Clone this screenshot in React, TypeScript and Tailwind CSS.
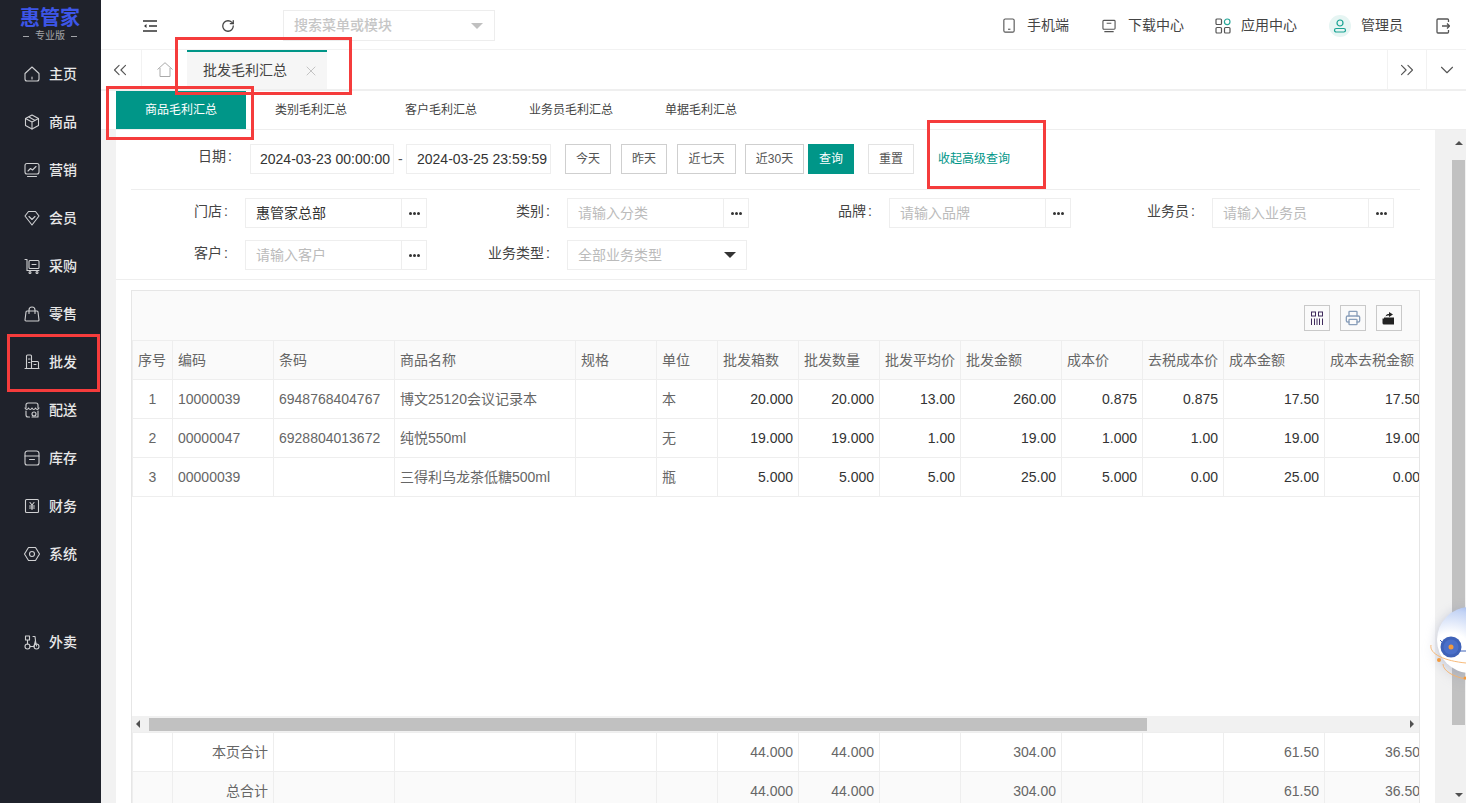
import type { ReactNode } from "react";
import { ChevronDown, ChevronsLeft, ChevronsRight, Printer, RotateCw, X } from "lucide-react";

const widths = [40, 101, 121, 181, 81, 61, 81, 81, 81, 101, 81, 81, 101, 101];
const headers = ["序号", "编码", "条码", "商品名称", "规格", "单位", "批发箱数", "批发数量", "批发平均价", "批发金额", "成本价", "去税成本价", "成本金额", "成本去税金额"];
const rows = [
  ["1", "10000039", "6948768404767", "博文25120会议记录本", "", "本", "20.000", "20.000", "13.00", "260.00", "0.875", "0.875", "17.50", "17.50"],
  ["2", "00000047", "6928804013672", "纯悦550ml", "", "无", "19.000", "19.000", "1.00", "19.00", "1.000", "1.00", "19.00", "19.00"],
  ["3", "00000039", "", "三得利乌龙茶低糖500ml", "", "瓶", "5.000", "5.000", "5.00", "25.00", "5.000", "0.00", "25.00", "0.00"],
];
const totals = [
  ["", "本页合计", "", "", "", "", "44.000", "44.000", "", "304.00", "", "", "61.50", "36.50"],
  ["", "总合计", "", "", "", "", "44.000", "44.000", "", "304.00", "", "", "61.50", "36.50"],
];

function NavIcon({ children }: { children: ReactNode }) {
  return (
    <svg viewBox="0 0 16 16" className="h-4 w-4 shrink-0" fill="none" stroke="#cfd0d2" strokeWidth="1.100" strokeLinejoin="round" strokeLinecap="round">
      {children}
    </svg>
  );
}

const nav: { label: string; icon: ReactNode; gap?: boolean }[] = [
  { label: "主页", icon: <><path d="M1 7.500 8 1l7 6.500V13a2 2 0 0 1-2 2H3a2 2 0 0 1-2-2z" /><path d="M8 11v2" /></> },
  { label: "商品", icon: <><path d="M8 1l6.500 3.500v7L8 15l-6.500-3.500v-7z" /><path d="M1.500 4.500 8 8l6.500-3.500M8 8v7M5 3l6 3.500" /></> },
  { label: "营销", icon: <><rect x="1" y="1.500" width="14" height="10.500" rx="2" /><path d="M4 9l2.500-2.500 2 1.500L12 4.500M3.500 14.500h9" /></> },
  { label: "会员", icon: <><path d="M4.500 1.500h7L15 6l-7 9-7-9z" /><path d="M5 6.500 8 9.500l3-3" /></> },
  { label: "采购", icon: <><path d="M1 1.500h2v10.500" /><rect x="5" y="2.500" width="10" height="8" rx="1" /><path d="M8 6.500h4M3 12.500h12" /><circle cx="6" cy="14.500" r="1" /><circle cx="13" cy="14.500" r="1" /></> },
  { label: "零售", icon: <><path d="M3 5h10a1 1 0 0 1 1 1l1 8a1 1 0 0 1-1 1H2a1 1 0 0 1-1-1l1-8a1 1 0 0 1 1-1z" /><path d="M5 7.500V4a3 3 0 0 1 6 0v3.500" /></> },
  { label: "批发", icon: <><path d="M2.500 14.500V2a1 1 0 0 1 1-1h3a1 1 0 0 1 1 1v12.500M7.500 7.500h6a1 1 0 0 1 1 1v6" /><path d="M1 14.500h14M4.500 5h1.500M4.500 8.500h1.500M10 10.500h2" /></> },
  { label: "配送", icon: <><path d="M2 6V3a2 2 0 0 1 2-2h8a2 2 0 0 1 2 2v3" /><path d="M1 6c1 2 2.500 2 3.500 0 1 2 2.500 2 3.500 0 1 2 2.500 2 3.500 0 1 2 2.500 2 3.500 0" /><path d="M2 9v4a2 2 0 0 0 2 2h1.500M14 9v6H8" /><circle cx="10" cy="12" r="2" /></> },
  { label: "库存", icon: <><path d="M1 6V3.500A2.500 2.500 0 0 1 3.500 1h9A2.500 2.500 0 0 1 15 3.500V6z" /><path d="M1 6v7a2 2 0 0 0 2 2h10a2 2 0 0 0 2-2V6M5.500 9.500h5" /></> },
  { label: "财务", icon: <><rect x="1.500" y="1.500" width="13" height="13" rx="1" /><path d="M6 4.500l2 2.500 2-2.500M5.500 8h5M5.500 10h5M8 7v4.500" /></> },
  { label: "系统", icon: <><path d="M4.500 1.500h7L15.500 8l-4 6.500h-7L.5 8z" /><circle cx="8" cy="8" r="2.500" /></> },
  { label: "外卖", gap: true, icon: <><circle cx="3.500" cy="12.500" r="2.500" /><circle cx="12.500" cy="12.500" r="2.500" /><path d="M1.500 2h4v4h-4zM6 12.500h4l1.500-6L11 2.500H9M3.500 6v4M11.500 7l1 5" /></> },
];

function Sidebar() {
  return (
    <aside className="flex w-[101px] shrink-0 flex-col bg-[#1f222b]">
      <div className="flex h-[50px] flex-col items-center pt-[7px] pr-[1px]">
        <div className="text-[20px] leading-[22px] font-bold text-[#3d56e8]">惠管家</div>
        <div className="flex items-center gap-[6px] text-[10px] leading-[14px] text-[#a3a5a9]">
          <span className="h-px w-[6px] bg-[#a3a5a9]" />
          专业版
          <span className="h-px w-[6px] bg-[#a3a5a9]" />
        </div>
      </div>
      {nav.map((item) => (
        <div key={item.label} className={`flex h-12 items-center gap-[9px] pl-[24px] text-[14px] font-medium text-[#e8e8e8] ${item.gap ? "mt-10" : ""}`}>
          <NavIcon>{item.icon}</NavIcon>
          {item.label}
        </div>
      ))}
    </aside>
  );
}

function TopItem({ icon, label, className }: { icon: ReactNode; label: string; className: string }) {
  return (
    <div className={`flex items-center ${className}`}>
      {icon}
      <span className="text-[14px] text-[#444]">{label}</span>
    </div>
  );
}

function Header() {
  return (
    <header className="flex h-[50px] shrink-0 items-center border-b border-[#f2f2f2] pt-[2px]">
      <div className="flex w-[98px] justify-center">
        <svg viewBox="0 0 14 12" className="h-3 w-[14px]" fill="none" stroke="#333" strokeWidth="1.300">
          <path d="M0 1h14M6 6h8M0 11h14" />
          <path d="M3.500 4 1 6l2.500 2z" fill="#333" stroke="none" />
        </svg>
      </div>
      <div className="flex w-[58px] justify-center">
        <RotateCw size={14} strokeWidth={2.200} color="#444" />
      </div>
      <div className="ml-[26px] flex h-[31px] w-[212px] items-center justify-between border border-[#ededed] px-[10px] text-[14px] font-medium text-[#c6c6c6]">
        搜索菜单或模块
        <span className="mr-[1px] h-0 w-0 border-x-[6px] border-t-[6px] border-x-transparent border-t-[#c0c0c0]" />
      </div>
      <div className="ml-auto flex items-center">
        <TopItem
          className="w-[100px] gap-[11px]"
          label="手机端"
          icon={
            <svg viewBox="0 0 14 16" className="h-[15px] w-[14px]" fill="none" stroke="#555" strokeWidth="1.200">
              <rect x="1.500" y="1" width="11" height="14" rx="1.500" />
              <path d="M6 12h2.500" />
            </svg>
          }
        />
        <TopItem
          className="w-[113px] gap-[12px]"
          label="下载中心"
          icon={
            <svg viewBox="0 0 15 14" className="h-[14px] w-[14px]" fill="none" stroke="#555" strokeWidth="1.200">
              <rect x="1" y="1" width="13" height="9.500" rx="1" />
              <path d="M5 4h5M2.500 13h10" />
            </svg>
          }
        />
        <TopItem
          className="w-[114px] gap-[10px]"
          label="应用中心"
          icon={
            <svg viewBox="0 0 16 16" className="h-4 w-4" fill="none" stroke="#555" strokeWidth="1.200">
              <rect x="1" y="1" width="5.500" height="5.500" rx="1" />
              <rect x="1" y="9.500" width="5.500" height="5.500" rx="1" />
              <rect x="9.500" y="9.500" width="5.500" height="5.500" rx="1" />
              <circle cx="12.200" cy="3.800" r="2.800" stroke="#2aa89a" />
            </svg>
          }
        />
        <div className="flex w-[107px] items-center gap-[10px]">
          <span className="flex h-[22px] w-[22px] items-center justify-center rounded-full bg-[#e6f5f3]">
            <svg viewBox="0 0 14 14" className="h-[14px] w-[14px]" fill="none" stroke="#1aa394" strokeWidth="1.200">
              <circle cx="7" cy="4" r="3" />
              <rect x="1.500" y="9.500" width="11" height="3.500" rx="1.700" />
            </svg>
          </span>
          <span className="text-[14px] text-[#444]">管理员</span>
        </div>
        <svg viewBox="0 0 14 16" className="mr-[16px] h-4 w-[14px]" fill="none" stroke="#555" strokeWidth="1.300">
          <path d="M12.500 4V2a1 1 0 0 0-1-1H2a1 1 0 0 0-1 1v12a1 1 0 0 0 1 1h9.500a1 1 0 0 0 1-1v-2" />
          <path d="M6 8h7.500M11 5.500 13.500 8 11 10.500" />
        </svg>
      </div>
    </header>
  );
}

function TabBar() {
  return (
    <div className="flex h-[41px] shrink-0 items-stretch border-b-2 border-[#efefef]">
      <div className="flex w-[41px] items-center justify-center border-r border-[#f2f2f2] pr-[2px]">
        <ChevronsLeft size={22} strokeWidth={1.200} color="#555" />
      </div>
      <div className="flex w-[45px] items-center justify-center">
        <svg viewBox="0 0 16 15" className="h-[15px] w-4" fill="none" stroke="#aaa" strokeWidth="1">
          <path d="M.5 7.500 8 .7l7.500 6.800M3 6v8.500h10V6" />
        </svg>
      </div>
      <div className="flex w-[140px] items-center justify-between border-t-2 border-[#009688] bg-[#f6f6f6] pr-[8px] pl-[16px] text-[14px] text-[#444]">
        批发毛利汇总
        <X size={16} strokeWidth={1.500} color="#c4c4c4" />
      </div>
      <div className="ml-auto flex w-[40px] items-center justify-center border-x border-[#f2f2f2]">
        <ChevronsRight size={22} strokeWidth={1.200} color="#555" />
      </div>
      <div className="flex w-[39px] items-center justify-center">
        <ChevronDown size={22} strokeWidth={1.200} color="#555" />
      </div>
    </div>
  );
}

function SubTabs() {
  const tabs = ["商品毛利汇总", "类别毛利汇总", "客户毛利汇总", "业务员毛利汇总", "单据毛利汇总"];
  return (
    <div className="flex h-[39px] shrink-0 border-b border-[#eeeeee] pl-[15px]">
      {tabs.map((t, i) => (
        <div key={t} className={`flex h-[38px] w-[130px] items-center justify-center text-[12px] ${i === 0 ? "bg-[#009688] text-white" : "text-[#444]"}`}>
          {t}
        </div>
      ))}
    </div>
  );
}

function QuickButton({ label, className }: { label: string; className: string }) {
  return <div className={`flex h-[30px] items-center justify-center border border-[#cfcfcf] text-[12px] text-[#555] ${className}`}>{label}</div>;
}

function Field({ label, value, placeholder, select, className = "w-[322px]" }: { label: string; value?: string; placeholder?: string; select?: boolean; className?: string }) {
  return (
    <div className={`flex h-[30px] items-center ${className}`}>
      <label className="w-[105px] pb-[4px] text-right text-[14px] text-[#444]">
        {label}
        <span className="ml-[2px]">:</span>
      </label>
      <div className={`ml-[17px] flex h-[30px] items-center border border-[#eeeeee] ${select ? "w-[180px]" : "w-[182px]"}`}>
        <span className={`flex-1 pl-[10px] text-[14px] ${value ? "text-[#333]" : "text-[#bbbbbb]"}`}>{value ?? placeholder}</span>
        {select ? (
          <span className="mr-[10px] h-0 w-0 border-x-[6px] border-t-[6px] border-x-transparent border-t-[#333]" />
        ) : (
          <span className="flex h-full w-[25px] items-center justify-center gap-[1px] border-l border-[#eeeeee]">
            <i className="h-[3px] w-[3px] rounded-full bg-[#333]" />
            <i className="h-[3px] w-[3px] rounded-full bg-[#333]" />
            <i className="h-[3px] w-[3px] rounded-full bg-[#333]" />
          </span>
        )}
      </div>
    </div>
  );
}

function Filters() {
  return (
    <div className="shrink-0">
      <div className="mx-[15px] flex h-[60px] items-start border-b border-[#eeeeee] pt-[14px] pl-[67px]">
        <label className="flex h-[30px] w-[35px] items-center pb-[5px] text-[14px] whitespace-nowrap text-[#444]">
          日期<span className="ml-[2px]">:</span>
        </label>
        <div className="ml-[17px] flex h-[30px] w-[144px] items-center border border-[#eeeeee] pl-[9px] text-[14px] text-[#333]">2024-03-23 00:00:00</div>
        <span className="mx-[4px] flex h-[30px] w-[4px] items-center text-[14px] text-[#555]">-</span>
        <div className="flex h-[30px] w-[145px] items-center border border-[#eeeeee] pl-[10px] text-[14px] whitespace-nowrap text-[#333]">2024-03-25 23:59:59</div>
        <QuickButton label="今天" className="ml-[14px] w-[46px]" />
        <QuickButton label="昨天" className="ml-[10px] w-[46px]" />
        <QuickButton label="近七天" className="ml-[10px] w-[59px]" />
        <QuickButton label="近30天" className="ml-[9px] w-[59px]" />
        <div className="ml-[4px] flex h-[30px] w-[46px] items-center justify-center bg-[#009688] text-[12px] text-white">查询</div>
        <QuickButton label="重置" className="ml-[14px] w-[46px] border-[#e3e3e3]" />
        <span className="ml-[24px] flex h-[30px] items-center text-[12px] text-[#009688]">收起高级查询</span>
      </div>
      <div className="flex h-[90px] flex-col gap-[12px] border-b border-[#eeeeee] pt-[8px] pl-[7px]">
        <div className="flex">
          <Field label="门店" value="惠管家总部" />
          <Field label="类别" placeholder="请输入分类" />
          <Field label="品牌" placeholder="请输入品牌" className="w-[323px]" />
          <Field label="业务员" placeholder="请输入业务员" />
        </div>
        <div className="flex">
          <Field label="客户" placeholder="请输入客户" />
          <Field label="业务类型" placeholder="全部业务类型" select />
        </div>
      </div>
    </div>
  );
}

function Cols() {
  return (
    <colgroup>
      {widths.map((w, i) => (
        <col key={i} style={{ width: w }} />
      ))}
    </colgroup>
  );
}

function alignFor(i: number) {
  if (i === 0) return "text-center";
  return i >= 6 ? "text-right" : "text-left";
}

function DataTable() {
  const total = widths.reduce((a, b) => a + b, 0);
  return (
    <div className="mx-[15px] mt-[10px] w-[1289px] overflow-hidden border-x border-t border-[#e6e6e6]">
      <div className="flex h-[49px] items-start justify-end gap-[10px] bg-[#fafafa] pt-[14px] pr-[17px]">
        <span className="flex h-[26px] w-[26px] items-center justify-center border border-[#c9c9c9]">
          <svg viewBox="0 0 14 14" className="h-[14px] w-[14px]" fill="none" stroke="#3f2a5c" strokeWidth="1">
            <rect x="1.500" y="1" width="4" height="4" />
            <rect x="8.500" y="1" width="4" height="4" />
            <path d="M1.500 7.500V14M4.500 7.500V14M7 7.500V14M9.500 7.500V14M12.500 7.500V14" />
          </svg>
        </span>
        <span className="flex h-[26px] w-[26px] items-center justify-center border border-[#c9c9c9]">
          <Printer size={16} strokeWidth={2} color="#8a9fba" />
        </span>
        <span className="flex h-[26px] w-[26px] items-center justify-center border border-[#c9c9c9]">
          <svg viewBox="0 0 14 14" className="h-[14px] w-[14px]" fill="#222">
            <path d="M0.500 7.500h1.500V6.500h10v7H2a1.500 1.500 0 0 1-1.500-1.500z" />
            <path d="M3.500 5.500C4 3.500 5.500 3 7 3V1l4 2.500L7 6V4.500c-1.500 0-2.500.3-3.500 1z" />
          </svg>
        </span>
      </div>
      <div className="h-[376px] overflow-hidden">
        <table className="table-fixed border-collapse text-[14px]" style={{ width: total }}>
          <Cols />
          <thead>
            <tr className="h-[39px] bg-[#fafafa] text-[#666]">
              {headers.map((h) => (
                <th key={h} className="border border-[#eeeeee] px-[5px] text-left font-normal whitespace-nowrap">
                  {h}
                </th>
              ))}
            </tr>
          </thead>
          <tbody>
            {rows.map((r) => (
              <tr key={r[0]} className="h-[39px]">
                {r.map((c, i) => (
                  <td key={i} className={`border border-[#eeeeee] px-[5px] whitespace-nowrap ${alignFor(i)} ${i < 6 ? "text-[#666]" : "text-[#333]"}`}>
                    {c}
                  </td>
                ))}
              </tr>
            ))}
          </tbody>
        </table>
      </div>
      <div className="flex h-[16px] items-center bg-[#f1f1f1]">
        <span className="mr-[9px] ml-[4px] h-0 w-0 border-y-[4px] border-r-[4px] border-y-transparent border-r-[#505050]" />
        <div className="h-[13px] w-[998px] bg-[#c1c1c1]" />
        <span className="mr-[5px] ml-auto h-0 w-0 border-y-[4px] border-l-[4px] border-y-transparent border-l-[#505050]" />
      </div>
      <table className="table-fixed border-collapse text-[14px] text-[#666]" style={{ width: total }}>
        <Cols />
        <tbody>
          {totals.map((r, n) => (
            <tr key={n} className={`h-[39px] ${n === 1 ? "bg-[#fafafa]" : ""}`}>
              {r.map((c, i) => (
                <td key={i} className="border border-[#eeeeee] px-[5px] text-right whitespace-nowrap">
                  {c}
                </td>
              ))}
            </tr>
          ))}
        </tbody>
      </table>
    </div>
  );
}

function PageScrollbar() {
  return (
    <div className="flex w-[31px] shrink-0 flex-col items-end bg-[#f1f1f1] pr-[1px]">
      <div className="flex h-[30px] w-[13px] items-center justify-center pb-[4px]">
        <span className="h-0 w-0 border-x-[4px] border-b-[4px] border-x-transparent border-b-[#505050]" />
      </div>
      <div className="h-[565px] w-[13px] bg-[#c1c1c1]" />
      <div className="flex w-[13px] flex-1 items-end justify-center pb-[6px]">
        <span className="h-0 w-0 border-x-[4px] border-t-[4px] border-x-transparent border-t-[#505050]" />
      </div>
    </div>
  );
}

function Robot() {
  return (
    <svg viewBox="0 0 40 90" className="absolute top-[600px] right-0 h-[90px] w-[40px] drop-shadow-[0_2px_6px_rgba(120,130,170,0.4)]">
      <defs>
        <radialGradient id="head" cx="0.2" cy="0.75" r="1">
          <stop offset="0.35" stopColor="#ffffff" />
          <stop offset="0.7" stopColor="#c4d4f5" />
          <stop offset="1" stopColor="#6f93e0" />
        </radialGradient>
      </defs>
      <circle cx="44" cy="40" r="33" fill="url(#head)" />
      <path d="M5 45c-2 9 14 16 35 18M17 64c0 7 11 13 23 15" fill="none" stroke="#f6b26b" strokeWidth="0.900" />
      <path d="M14 40l3 3M34 51h6" stroke="#3f62b8" strokeWidth="1" />
      <circle cx="25" cy="47" r="10.500" fill="#3f62b8" />
      <circle cx="25" cy="47" r="7.500" fill="#4a6fc9" />
      <circle cx="25" cy="47" r="2.500" fill="#f39a3d" />
      <circle cx="13" cy="60" r="2" fill="#f39a3d" />
      <circle cx="39" cy="78" r="1.500" fill="#f39a3d" />
    </svg>
  );
}

function Mark({ className }: { className: string }) {
  return <div className={`pointer-events-none absolute border-[3px] border-[#f53c3c] ${className}`} />;
}

export default function App() {
  return (
    <div className="relative flex h-[803px] w-[1466px] overflow-hidden bg-white [font-family:'Liberation_Sans','Noto_Sans_CJK_SC',sans-serif]">
      <Sidebar />
      <main className="flex min-w-0 flex-1 flex-col">
        <Header />
        <TabBar />
        <SubTabs />
        <div className="flex min-h-0 flex-1">
          <div className="w-[15px] shrink-0 bg-[#f2f2f2]" />
          <div className="min-w-0 flex-1 overflow-hidden">
            <Filters />
            <DataTable />
          </div>
          <PageScrollbar />
        </div>
      </main>
      <Robot />
      <Mark className="top-[37px] left-[175px] h-[58px] w-[177px]" />
      <Mark className="top-[86px] left-[106px] h-[54px] w-[148px]" />
      <Mark className="top-[120px] left-[927px] h-[69px] w-[119px]" />
      <Mark className="top-[334px] left-[7px] h-[58px] w-[93px]" />
    </div>
  );
}
